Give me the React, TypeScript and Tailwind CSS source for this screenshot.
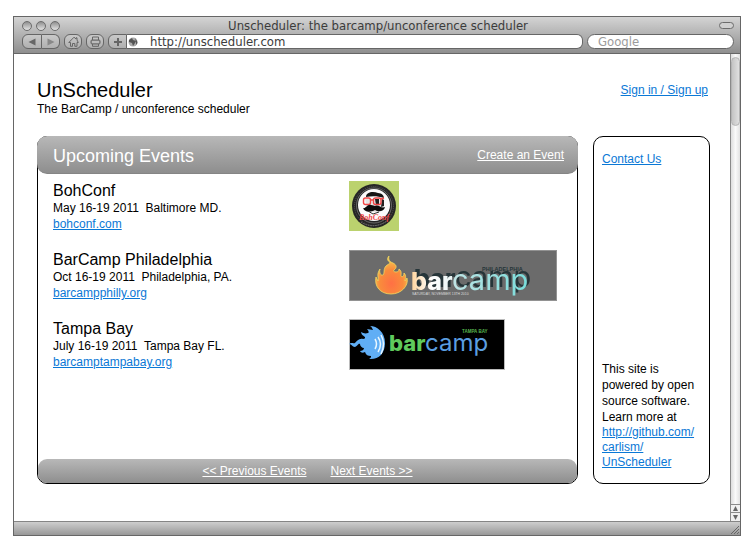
import React from 'react';

function BohConfLogo() {
  return (
    <svg viewBox="0 0 50 50" role="img" aria-label="BohConf" className="h-[50px] w-[50px]">
      <rect width="50" height="50" fill="#bbd26e" />
      <circle cx="25" cy="25" r="22" fill="#252525" />
      <circle cx="25" cy="25" r="19.5" fill="none" stroke="#555" strokeWidth="1" strokeDasharray="1 1" />
      <circle cx="25" cy="24.5" r="17.5" fill="none" stroke="#999" strokeWidth="0.6" />
      <circle cx="25" cy="24" r="16" fill="#fbfbfb" />
      <path d="M17 16c0-5 7-6 12-4 4 0 6 3 6 5-6-2-12-2-18-1z" fill="#161616" />
      <path d="M16 18l2 9 3 4h9l5-5v-8z" fill="#e6e6e6" />
      <path d="M26 18h4v6h-3z" fill="#222" />
      <path d="M33 18l2 1v6l-3 1z" fill="#222" />
      <rect x="14.5" y="17" width="7" height="6.5" rx="2" fill="none" stroke="#f04747" strokeWidth="1.4" />
      <rect x="24.5" y="17" width="7.5" height="6.5" rx="2" fill="none" stroke="#f04747" strokeWidth="1.4" />
      <path d="M22 19h3M32 18l3-1" stroke="#f04747" strokeWidth="1.4" />
      <path d="M14 27c3 1 4-4 8-3 2 0 3 1 4 1 4-2 6 3 10 1-1 5-7 5-10 3-4 2-10 3-12-2z" fill="#0c0c0c" />
      <path d="M19 30l5 3 6-2" fill="none" stroke="#333" strokeWidth="1" />
      <text x="25" y="39" textAnchor="middle" fontSize="8" fontStyle="italic" fontWeight="bold" fill="#ee4548" className="font-['Liberation_Serif',serif]">BohConf</text>
      <path d="M12 41q12 8 26-1" fill="none" stroke="#777" strokeWidth="1" strokeDasharray="1.5 1" />
    </svg>
  );
}

function PhiladelphiaLogo() {
  return (
    <svg viewBox="0 0 208 51" role="img" aria-label="BarCamp Philadelphia" className="h-[51px] w-52">
      <defs>
        <radialGradient id="fire" cx="50%" cy="72%" r="60%">
          <stop offset="0" stopColor="#ff7044" />
          <stop offset="0.6" stopColor="#f98b3c" />
          <stop offset="1" stopColor="#f9c04e" />
        </radialGradient>
        <linearGradient id="bar">
          <stop offset="0" stopColor="#ffd49c" />
          <stop offset="0.5" stopColor="#fff" />
          <stop offset="1" stopColor="#e9f4f4" />
        </linearGradient>
        <linearGradient id="camp">
          <stop offset="0" stopColor="#c0e4e5" />
          <stop offset="1" stopColor="#78dcda" />
        </linearGradient>
      </defs>
      <rect x="0.5" y="0.5" width="207" height="50" fill="#6b6b6b" stroke="#929292" />
      <path d="M40 6c-1 4 1 6 4 7 4 2 4 5 1 7-1 1 0 2 2 2 2 0 3-1 3-3 3 2 2 5 2 7 1 2 3 0 3-3 3 3 1 6 1 8l2-3c2 8-6 16-16 16-11 0-17-8-15-17l2 4c1-4-2-6 2-12-1 4 1 7 3 6 2-2 0-6 3-9 2-2 4-2 4-4-3-1-3-4-1-6z" fill="url(#fire)" stroke="#f0d860" strokeWidth="0.8" />
      <g className="font-['Inter',sans-serif] drop-shadow-[3px_-3px_0_#263539]">
        <text x="62" y="40" fontSize="25" fontWeight="800" fill="url(#bar)">bar</text>
        <text x="103" y="40" fontSize="29" fontWeight="400" fill="url(#camp)">camp</text>
      </g>
      <text x="133" y="21" fontSize="5.5" fontWeight="bold" fill="#263539" className="font-['Liberation_Sans',sans-serif]">PHILADELPHIA</text>
      <text x="63" y="45" fontSize="3.4" fill="#ddd" className="font-['Liberation_Sans',sans-serif]">SATURDAY, NOVEMBER 13TH 2010</text>
    </svg>
  );
}

function TampaBayLogo() {
  return (
    <svg viewBox="0 0 156 51" role="img" aria-label="BarCamp Tampa Bay" className="h-[51px] w-[156px]">
      <rect x="0.5" y="0.5" width="155" height="50" fill="#000" stroke="#bbb" />
      <path d="M24 11c-1-2-1-3-3-4 7 0 15 6 15 17s-7 17-16 16c2-1 2-2 2-3-3 0-5-1-6-4-2 1-4 1-5-1 2 0 4-1 4-3-2 0-4-2-4-4-2-1-2 2-5 3-3 0-3-3-6-3 2-2 4 0 6-1 2-2 4-5 8-4 2 0 2-1 2-2-2-2-3-1-4-5 2 1 4 2 7 1 1 0 1-2-1-4 2 0 4 1 6 1z" fill="#60aef5" />
      <path d="M26 20q3 5 0 10M29 18q5 7 0 15M32 16q5 9 0 19" fill="none" stroke="#eaf7ff" strokeWidth="1.5" />
      <g className="font-['Inter',sans-serif]">
        <text x="40" y="32" fontSize="22" fontWeight="800" fill="#5fca5c">bar</text>
        <text x="76" y="32" fontSize="24" fontWeight="400" fill="#5b9ee0">camp</text>
      </g>
      <text x="113" y="14" fontSize="4.5" fontWeight="bold" fill="#58b94f" className="font-['Liberation_Sans',sans-serif]">TAMPA BAY</text>
    </svg>
  );
}

const events = [
  { name: 'BohConf', date: 'May 16-19 2011', place: 'Baltimore MD.', site: 'bohconf.com', logo: <BohConfLogo /> },
  { name: 'BarCamp Philadelphia', date: 'Oct 16-19 2011', place: 'Philadelphia, PA.', site: 'barcampphilly.org', logo: <PhiladelphiaLogo /> },
  { name: 'Tampa Bay', date: 'July 16-19 2011', place: 'Tampa Bay FL.', site: 'barcamptampabay.org', logo: <TampaBayLogo /> },
];

const toolButton = 'flex h-[15px] items-center justify-center border border-[#666] bg-linear-to-b from-[#c9c9c9] to-[#b0b0b0] text-[#666]';

function BrowserBar() {
  return (
    <header className="border-b border-[#666] bg-linear-to-b from-[#d4d4d4] to-[#8f8f8f] pr-1.5 pb-1 pl-2 font-['DejaVu_Sans_Condensed','DejaVu_Sans',sans-serif] text-[13px] text-[#3c3c3c]">
      <div className="grid h-[17px] grid-cols-[1fr_auto_1fr] items-center">
        <div className="flex gap-1">
          {['Close', 'Minimize', 'Zoom'].map((label) => (
            <button key={label} aria-label={label} className="size-2.5 rounded-full border border-[#6c6c6c] bg-linear-to-b from-[#909090] to-[#e4e4e4]" />
          ))}
        </div>
        <h1 className="leading-4">Unscheduler: the barcamp/unconference scheduler</h1>
        <button aria-label="Toggle toolbar" className="h-[7px] w-[15px] justify-self-end rounded-full border border-[#6c6c6c] bg-[#d0d0d0]" />
      </div>
      <div className="flex gap-1">
        <div className="flex">
          <button aria-label="Back" className={`${toolButton} w-5 rounded-l-md`}>
            <svg viewBox="0 0 8 8" className="size-2"><path d="M7.5 0.5v7L0.5 4z" fill="currentColor" /></svg>
          </button>
          <button aria-label="Forward" className={`${toolButton} w-[18px] rounded-r-md border-l-0`}>
            <svg viewBox="0 0 8 8" className="size-2"><path d="M0.5 0.5v7l7-3.5z" fill="#888" /></svg>
          </button>
        </div>
        <button aria-label="Home" className={`${toolButton} w-[18px] rounded-md`}>
          <svg viewBox="0 0 11 11" className="size-[11px]" fill="none" stroke="currentColor"><path d="M0.8 6.5L6 1.2l2 1.8V1.8h1V4l1.3 2.5H9v3.8H6.8V7.5H4.5v2.8H2.5V6.5z" /></svg>
        </button>
        <button aria-label="Print" className={`${toolButton} w-[18px] rounded-md`}>
          <svg viewBox="0 0 11 11" className="size-[11px]" fill="none" stroke="currentColor"><path d="M2.5 4V1h6v3M2.5 8v2.3h6V8" /><rect x="1" y="4" width="9" height="4" rx="1" fill="#999" /><path d="M2 6h7" stroke="#ddd" /></svg>
        </button>
        <div className="flex min-w-0 flex-1">
          <button aria-label="Add bookmark" className={`${toolButton} w-[19px] shrink-0 rounded-l-md`}>
            <svg viewBox="0 0 8 8" className="size-2"><path d="M4 0v8M0 4h8" stroke="currentColor" strokeWidth="2" /></svg>
          </button>
          <div className="flex h-[15px] min-w-0 flex-1 items-center rounded-r-md border border-l-0 border-[#666] bg-white pl-px">
            <svg viewBox="0 0 10 10" className="size-2.5 shrink-0"><circle cx="5" cy="5" r="4.5" fill="#aaa" /><path d="M1 3l3-2 1 2 3 1-1 2-2 3-1-3-3-1zM7 1l2 3 .5 2L8 8V5z" fill="#555" /></svg>
            <input aria-label="Address" defaultValue="http://unscheduler.com" className="h-[13px] min-w-0 flex-1 bg-transparent pl-3 leading-[13px] outline-none" />
          </div>
        </div>
        <input type="text" aria-label="Search" placeholder="Google" className="h-[15px] w-[147px] min-w-0 rounded-full border border-[#666] bg-white px-2.5 leading-[13px] outline-none placeholder:text-[#9b9b9b]" />
      </div>
    </header>
  );
}

function Scrollbar() {
  return (
    <div className="flex w-2.5 shrink-0 flex-col border-l border-[#8a8a8a] bg-linear-to-r from-[#dedede] via-[#fafafa] to-[#e2e2e2] pt-[3px]">
      <div className="h-[69px] rounded-full border border-[#b4b4b4] bg-linear-to-r from-[#c4c4c4] to-[#e0e0e0]" />
      <div className="mt-auto flex flex-col text-[#666]">
        <button aria-label="Scroll up" className="flex h-2 items-center justify-center border-t border-[#8a8a8a] bg-[#f0f0f0]">
          <svg viewBox="0 0 5 5" className="size-[5px]"><path d="M0 5h5L2.5 0z" fill="currentColor" /></svg>
        </button>
        <button aria-label="Scroll down" className="flex h-[9px] items-center justify-center border-t border-[#8a8a8a] bg-[#f0f0f0]">
          <svg viewBox="0 0 5 5" className="size-[5px]"><path d="M0 0h5L2.5 5z" fill="currentColor" /></svg>
        </button>
      </div>
    </div>
  );
}

function Events() {
  return (
    <section className="flex min-w-0 flex-1 flex-col rounded-[10px] border border-black">
      <div className="-mx-px -mt-px flex h-[38px] items-center justify-between rounded-[10px] border-b border-[#858585] bg-linear-to-b from-[#b8b8b8] to-[#8e8e8e] pr-3.5 pl-4 text-white">
        <h3 className="pt-0.5 text-lg leading-6">Upcoming Events</h3>
        <a href="#create" className="underline underline-offset-1">Create an Event</a>
      </div>
      <ul className="flex flex-1 flex-col gap-[18px] px-[15px] pt-[7px]">
        {events.map((event) => (
          <li key={event.name} className="grid h-[51px] grid-cols-[296px_1fr]">
            <div>
              <h4 className="text-base leading-5">{event.name}</h4>
              <p className="leading-[15px]">{event.date}&nbsp; {event.place}</p>
              <a href={`http://${event.site}`} className="block w-fit leading-4 text-[#0a78d6] underline underline-offset-1">{event.site}</a>
            </div>
            {event.logo}
          </li>
        ))}
      </ul>
      <nav className="flex h-6 items-center justify-center gap-6 rounded-[9px] bg-linear-to-b from-[#b8b8b8] to-[#8e8e8e] text-white">
        <a href="#previous" className="underline underline-offset-1">&lt;&lt; Previous Events</a>
        <a href="#next" className="underline underline-offset-1">Next Events &gt;&gt;</a>
      </nav>
    </section>
  );
}

function Sidebar() {
  return (
    <aside className="flex w-[117px] shrink-0 flex-col justify-between rounded-[10px] border border-black pt-3.5 pr-2 pb-[13px] pl-2">
      <a href="#contact" className="w-fit text-[#0a78d6] underline underline-offset-1">Contact Us</a>
      <div>
        <p>This site is<br />powered by open<br />source software.<br />Learn more at</p>
        <a href="http://github.com/carlism/UnScheduler" className="block leading-[15px] text-[#0a78d6] underline underline-offset-1">
          http://github.com/<br />carlism/<br />UnScheduler
        </a>
      </div>
    </aside>
  );
}

export default function App() {
  return (
    <div className="flex min-h-screen bg-white pt-4 pr-[15px] pb-[17px] pl-[13px]">
      <div className="flex min-w-0 flex-1 flex-col border border-[#666]">
        <BrowserBar />
        <div className="flex flex-1">
          <main className="flex min-w-0 flex-1 flex-col pt-6 pr-5 pb-[37px] pl-[23px] font-['Liberation_Sans',Arial,sans-serif] text-xs text-black">
            <div className="flex items-start justify-between pb-[19px]">
              <div>
                <h2 className="text-xl leading-6">UnScheduler</h2>
                <p className="leading-[15px]">The BarCamp / unconference scheduler</p>
              </div>
              <a href="#signin" className="pt-1 pr-0.5 text-[#0a78d6] underline underline-offset-1">Sign in / Sign up</a>
            </div>
            <div className="flex flex-1 gap-[15px]">
              <Events />
              <Sidebar />
            </div>
          </main>
          <Scrollbar />
        </div>
        <footer className="flex h-3.5 items-end justify-end border-t border-[#858585] bg-linear-to-b from-[#cecece] to-[#989898] p-px">
          <svg viewBox="0 0 8 8" className="size-2" stroke="#666"><path d="M0 8l8-8M3 8l5-5M6 8l2-2" /></svg>
        </footer>
      </div>
    </div>
  );
}
